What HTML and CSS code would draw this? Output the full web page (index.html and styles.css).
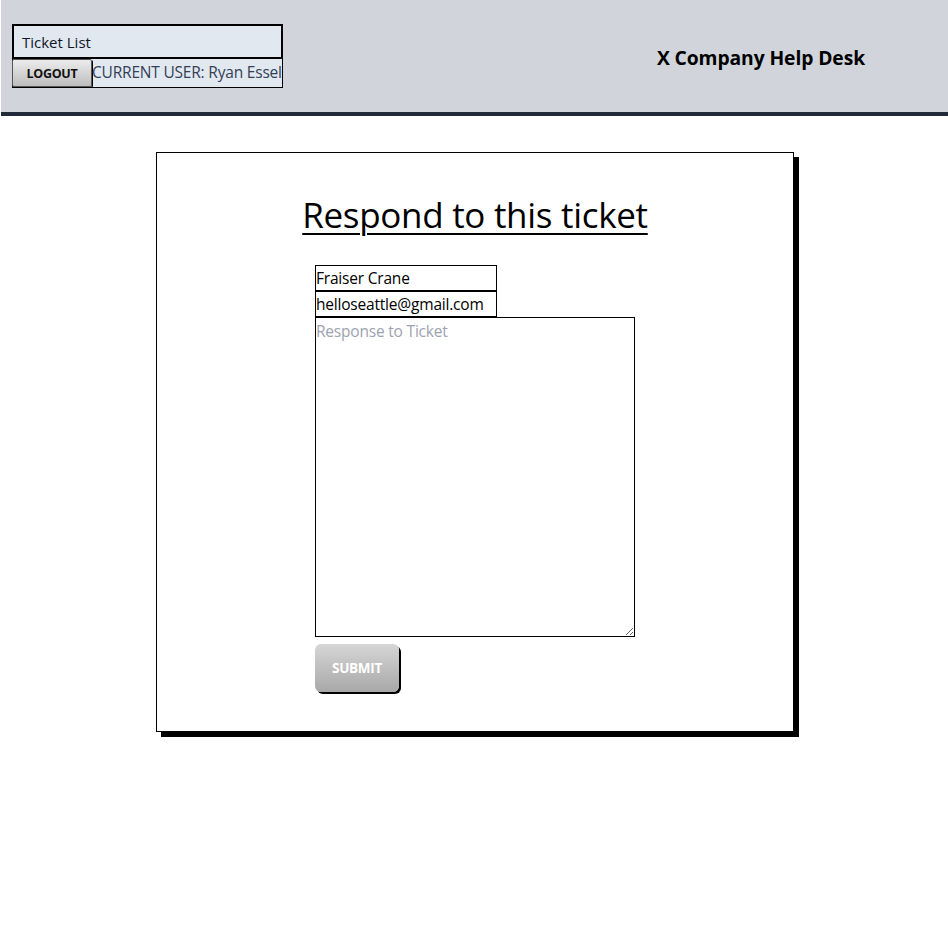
FILE: index.html
```html
<!DOCTYPE html>
<html>
<head>
<meta charset="utf-8">
<link rel="stylesheet" href="styles.css">
</head>
<body>
<header class="topbar">
  <nav class="nav">
    <div class="nav-link">Ticket List</div>
    <div class="nav-user">
      <button class="logout">LOGOUT</button>
      <span class="user">CURRENT USER: Ryan Essel</span>
    </div>
  </nav>
  <div class="brand">X Company Help Desk</div>
</header>
<main class="main">
  <section class="card">
    <h1 class="title">Respond to this ticket</h1>
    <form class="form">
      <input class="field" type="text" value="Fraiser Crane">
      <input class="field" type="text" value="helloseattle@gmail.com">
      <textarea class="response" placeholder="Response to Ticket"></textarea>
      <button class="submit" type="button">SUBMIT</button>
    </form>
  </section>
</main>
</body>
</html>
```
FILE: styles.css
```css
* { box-sizing: border-box; }
html, body { min-height: 100%; }
body {
  margin: 0;
  min-height: 943px;
  font-family: "Open Sans", "Noto Sans", sans-serif;
  background: #fff;
  color: #000;
}
.topbar {
  height: 116px;
  background: #d1d5db;
  border-bottom: 4px solid #1f2937;
  margin-left: 1px;
  display: flex;
  align-items: flex-start;
  justify-content: space-between;
  padding: 24px 82px 0 11px;
}
.nav {
  width: 271px;
  display: flex;
  flex-direction: column;
}
.nav-link {
  height: 35px;
  background: #e2e8f0;
  border: 2px solid #000;
  padding: 0 0 0 8px;
  font-size: 15px;
  line-height: 33px;
  color: #0f172a;
}
.nav-user {
  height: 29px;
  display: flex;
  align-items: stretch;
  border: 1px solid #000;
  border-top: none;
  background: #e2e8f0;
}
.logout {
  width: 80px;
  margin: 0 0 0 -1px;
  padding: 0;
  border: 1px solid #555;
  border-radius: 2px;
  background: linear-gradient(#ececec, #bdbdbd);
  box-shadow: 1px 1px 0 #000;
  font-family: "Open Sans", sans-serif;
  font-weight: 700;
  font-size: 12.5px;
  color: #111;
  letter-spacing: -0.3px;
}
.user {
  font-size: 15.5px;
  line-height: 27px;
  color: #334155;
  white-space: nowrap;
  letter-spacing: -0.2px;
}
.brand {
  margin-top: 20px;
  margin-right: 1px;
  font-weight: 700;
  font-size: 19.3px;
  letter-spacing: -0.1px;
}
.main {
  display: flex;
  justify-content: center;
  padding: 36px 0 40px 2px;
}
.card {
  width: 638px;
  height: 580px;
  border: 1px solid #000;
  box-shadow: 5px 5px 0 #000;
  display: flex;
  flex-direction: column;
  align-items: center;
}
.title {
  margin: 34px 0 0 0;
  font-weight: 400;
  font-size: 35px;
  line-height: 56px;
  text-decoration: underline;
  text-decoration-thickness: 2px;
  text-underline-offset: 5px;
  letter-spacing: -0.3px;
}
.form {
  width: 320px;
  margin-top: 22px;
  display: flex;
  flex-direction: column;
  align-items: flex-start;
}
.field {
  width: 182px;
  height: 26px;
  margin: 0;
  padding: 0;
  border: 1px solid #000;
  font-family: "Open Sans", sans-serif;
  font-size: 15.5px;
  color: #000;
  letter-spacing: -0.2px;
  outline: none;
}
.response {
  width: 320px;
  height: 320px;
  margin: 0;
  padding: 2px 0;
  border: 1px solid #000;
  font-family: "Open Sans", sans-serif;
  font-size: 15.5px;
  letter-spacing: -0.2px;
  resize: vertical;
}
.response::placeholder { color: #9ca3af; }
.submit {
  margin-top: 7px;
  width: 84px;
  height: 48px;
  border: none;
  border-radius: 6px;
  background: linear-gradient(#d6d6d6, #a8a8a8);
  box-shadow: 2px 2px 0 #000;
  color: #fff;
  font-family: "Open Sans", sans-serif;
  font-weight: 700;
  font-size: 13.5px;
  letter-spacing: -0.3px;
}
```
